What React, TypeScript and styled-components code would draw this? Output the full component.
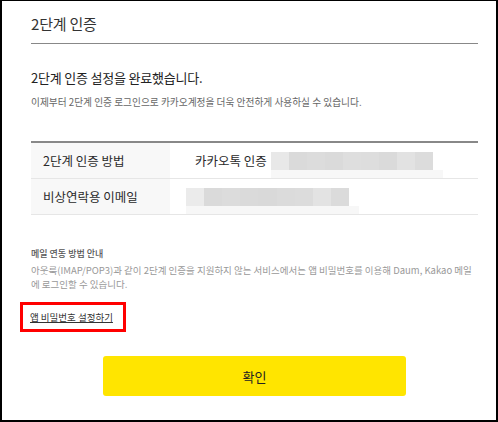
import styled, { createGlobalStyle } from "styled-components";

const GlobalStyle = createGlobalStyle`
  html, body {
    margin: 0;
    padding: 0;
    background: #fff;
  }
  body {
    font-family: "Noto Sans CJK KR", "Noto Sans", sans-serif;
    color: #333;
  }
`;

const Frame = styled.div`
  box-sizing: border-box;
  width: 498px;
  height: 422px;
  border: 2px solid #000;
  border-top-width: 1px;
  padding: 0 18px 0 29px;
  background: #fff;
`;

const Header = styled.div`
  padding: 13px 0 9px;
  border-bottom: 1px solid #888;
  h2 {
    margin: 0;
    font-size: 15px;
    line-height: 20px;
    font-weight: 400;
    color: #333;
    letter-spacing: -0.2px;
  }
`;

const Heading = styled.h3`
  margin: 25px 0 0;
  font-size: 13px;
  line-height: 18px;
  font-weight: 400;
  color: #222;
  letter-spacing: -0.2px;
`;

const Desc = styled.p`
  margin: 8px 0 0;
  font-size: 9.7px;
  line-height: 14px;
  color: #666;
`;

const Table = styled.div`
  margin-top: 32px;
  border-top: 2px solid #888;
`;

const Row = styled.div`
  display: grid;
  grid-template-columns: 139px 1fr;
  height: 35px;
  border-bottom: 1px solid #e6e6e6;
`;

const Label = styled.div`
  display: flex;
  align-items: center;
  padding-left: 12px;
  background: #f8f8f8;
  font-size: 12.5px;
  color: #2a2a2a;
`;

const Value = styled.div<{ $pad: number }>`
  display: flex;
  align-items: center;
  gap: 4px;
  padding-left: ${(p) => p.$pad}px;
  font-size: 12.5px;
  color: #2a2a2a;
`;

const Redact = styled.div<{ $w: number }>`
  display: flex;
  flex-direction: column;
  width: ${(p) => p.$w}px;
  margin-top: 9px;
`;

const RedactBand = styled.div`
  display: flex;
  height: 18px;
`;

const RedactCell = styled.span<{ $c: string }>`
  flex: 1;
  background: ${(p) => p.$c};
`;

const RedactFade = styled.div`
  height: 8px;
  margin-right: -10px;
  background: #f7f7f7;
`;

const Notes = styled.div`
  margin-top: 32px;
  line-height: 14px;
  strong {
    display: block;
    margin-bottom: 2px;
    font-size: 9px;
    font-weight: 500;
    color: #555;
  }
`;

const NoteLine = styled.div`
  font-size: 9.5px;
  color: #999;
  white-space: nowrap;
`;

const LinkBox = styled.div`
  box-sizing: border-box;
  width: 106px;
  margin: 11px 0 0 -11px;
  padding: 5px 0 5px 7px;
  border: 3px solid #f00;
  a {
    display: block;
    font-size: 9.5px;
    line-height: 14px;
    color: #333;
    text-decoration: underline;
    white-space: nowrap;
  }
`;

const ButtonRow = styled.div`
  display: flex;
  justify-content: center;
  margin-top: 24px;
`;

const ConfirmButton = styled.button`
  width: 303px;
  height: 40px;
  border: 0;
  border-radius: 3px;
  background: #ffe500;
  font-family: inherit;
  font-size: 13px;
  color: #222;
  cursor: pointer;
`;

const row1 = ["#e8e8e8", "#dadada", "#dcdcdc", "#dadada", "#dedede", "#dddddd", "#dadada", "#e2e2e2", "#dcdcdc"];
const row2 = ["#ebebeb", "#dadada", "#dcdcdc", "#dadada", "#d9d9d9", "#dbdbdb", "#dcdcdc", "#e3e3e3", "#dbdbdb"];

function Redacted({ width, colors }: { width: number; colors: string[] }) {
  return (
    <Redact $w={width}>
      <RedactBand>
        {colors.map((c, i) => (
          <RedactCell key={i} $c={c} />
        ))}
      </RedactBand>
      <RedactFade />
    </Redact>
  );
}

export default function App() {
  return (
    <>
      <GlobalStyle />
      <Frame>
        <Header>
          <h2>2단계 인증</h2>
        </Header>
        <Heading>2단계 인증 설정을 완료했습니다.</Heading>
        <Desc>이제부터 2단계 인증 로그인으로 카카오계정을 더욱 안전하게 사용하실 수 있습니다.</Desc>

        <Table>
          <Row>
            <Label>2단계 인증 방법</Label>
            <Value $pad={25}>
              카카오톡 인증
              <Redacted width={162} colors={row1} />
            </Value>
          </Row>
          <Row>
            <Label>비상연락용 이메일</Label>
            <Value $pad={16}>
              <Redacted width={163} colors={row2} />
            </Value>
          </Row>
        </Table>

        <Notes>
          <strong>메일 연동 방법 안내</strong>
          <NoteLine>
            아웃룩(IMAP/POP3)과 같이 2단계 인증을 지원하지 않는 서비스에서는 앱 비밀번호를 이용해 Daum, Kakao 메일
          </NoteLine>
          <NoteLine>에 로그인할 수 있습니다.</NoteLine>
        </Notes>

        <LinkBox>
          <a href="#">앱 비밀번호 설정하기</a>
        </LinkBox>

        <ButtonRow>
          <ConfirmButton>확인</ConfirmButton>
        </ButtonRow>
      </Frame>
    </>
  );
}
